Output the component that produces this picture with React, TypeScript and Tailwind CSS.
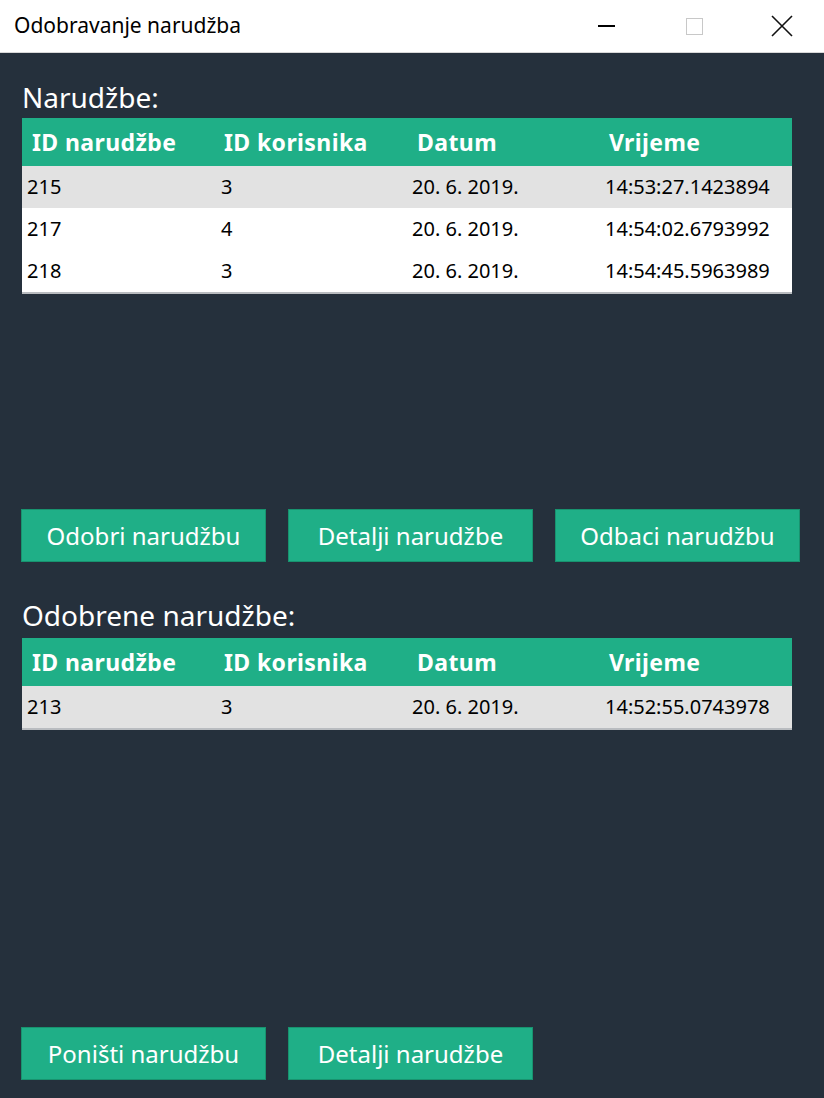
import React from "react";

const font = { fontFamily: '"Noto Sans", "Open Sans", sans-serif' };

type Row = [string, string, string, string];

const cols = ["ID narudžbe", "ID korisnika", "Datum", "Vrijeme"];

function Table({ rows }: { rows: Row[] }) {
  return (
    <div className="w-[770px] bg-white border-b-2 border-[#b9bcc0]">
      <div className="flex h-[48px] items-center bg-[#1faf87] text-white font-bold text-[23px] tracking-[0.4px]">
        <div className="w-[202px] pl-[10px]">{cols[0]}</div>
        <div className="w-[193px]">{cols[1]}</div>
        <div className="w-[192px]">{cols[2]}</div>
        <div className="flex-1">{cols[3]}</div>
      </div>
      {rows.map((r, i) => (
        <div
          key={i}
          className={`flex h-[42px] items-center text-[20px] text-black ${
            i === 0 ? "bg-[#e2e2e2]" : "bg-white"
          }`}
        >
          <div className="w-[199px] pl-[5px]">{r[0]}</div>
          <div className="w-[191px]">{r[1]}</div>
          <div className="w-[193px]">{r[2]}</div>
          <div className="flex-1">{r[3]}</div>
        </div>
      ))}
    </div>
  );
}

function Btn({ children }: { children: React.ReactNode }) {
  return (
    <div className="w-[245px] h-[53px] bg-[#1faf87] border border-[#18936f] flex items-center justify-center text-white text-[24px]">
      {children}
    </div>
  );
}

export default function App() {
  return (
    <div className="w-[824px] h-[1098px] flex flex-col bg-[#25303c]" style={font}>
      <div className="h-[53px] bg-white flex items-center border-b border-[#d8d8d8] shrink-0">
        <div className="pl-[14px] text-[21px] text-black flex-1">Odobravanje narudžba</div>
        <div className="w-[46px] h-[53px] flex items-center justify-center mr-[42px]">
          <div className="w-[17px] h-[2px] bg-black" />
        </div>
        <div className="w-[46px] h-[53px] flex items-center justify-center mr-[42px]">
          <div className="w-[17px] h-[17px] border border-[#c8c8c8]" />
        </div>
        <div className="w-[46px] h-[53px] flex items-center justify-center mr-[19px]">
          <svg width="22" height="22" viewBox="0 0 22 22">
            <path d="M1 1 L21 21 M21 1 L1 21" stroke="#111" strokeWidth="1.6" />
          </svg>
        </div>
      </div>
      <div className="flex flex-col pl-[22px]">
        <div className="text-white text-[28px] mt-[23px] h-[42px] leading-[42px]">Narudžbe:</div>
        <Table
          rows={[
            ["215", "3", "20. 6. 2019.", "14:53:27.1423894"],
            ["217", "4", "20. 6. 2019.", "14:54:02.6793992"],
            ["218", "3", "20. 6. 2019.", "14:54:45.5963989"],
          ]}
        />
        <div className="flex gap-[22px] mt-[215px] -ml-[1px]">
          <Btn>Odobri narudžbu</Btn>
          <Btn>Detalji narudžbe</Btn>
          <Btn>Odbaci narudžbu</Btn>
        </div>
        <div className="text-white text-[28px] mt-[31px] h-[45px] leading-[45px]">Odobrene narudžbe:</div>
        <Table rows={[["213", "3", "20. 6. 2019.", "14:52:55.0743978"]]} />
        <div className="flex gap-[22px] mt-[297px] -ml-[1px]">
          <Btn>Poništi narudžbu</Btn>
          <Btn>Detalji narudžbe</Btn>
        </div>
      </div>
    </div>
  );
}
